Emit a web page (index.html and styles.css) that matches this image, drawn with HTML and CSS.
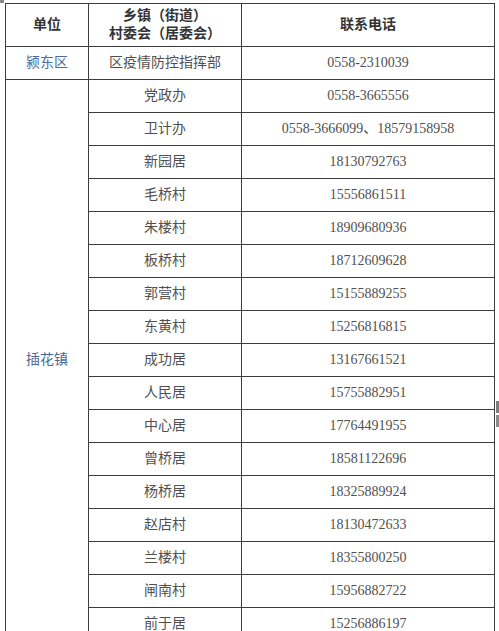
FILE: index.html
```html
<!DOCTYPE html>
<html lang="zh">
<head>
<meta charset="utf-8">
<link rel="stylesheet" href="styles.css">
</head>
<body>
<span class="corner-mark"></span>
<span class="edge-mark"></span>
<table class="contacts">
  <colgroup>
    <col class="c-unit">
    <col class="c-town">
    <col class="c-phone">
  </colgroup>
  <thead>
    <tr class="head">
      <th>单位</th>
      <th>乡镇（街道）<br>村委会（居委会）</th>
      <th>联系电话</th>
    </tr>
  </thead>
  <tbody>
    <tr><td class="unit">颍东区</td><td>区疫情防控指挥部</td><td>0558-2310039</td></tr>
    <tr><td class="unit" rowspan="17">插花镇</td><td>党政办</td><td>0558-3665556</td></tr>
    <tr><td>卫计办</td><td>0558-3666099、18579158958</td></tr>
    <tr><td>新园居</td><td>18130792763</td></tr>
    <tr><td>毛桥村</td><td>15556861511</td></tr>
    <tr><td>朱楼村</td><td>18909680936</td></tr>
    <tr><td>板桥村</td><td>18712609628</td></tr>
    <tr><td>郭营村</td><td>15155889255</td></tr>
    <tr><td>东黄村</td><td>15256816815</td></tr>
    <tr><td>成功居</td><td>13167661521</td></tr>
    <tr><td>人民居</td><td>15755882951</td></tr>
    <tr><td>中心居</td><td>17764491955</td></tr>
    <tr><td>曾桥居</td><td>18581122696</td></tr>
    <tr><td>杨桥居</td><td>18325889924</td></tr>
    <tr><td>赵店村</td><td>18130472633</td></tr>
    <tr><td>兰楼村</td><td>18355800250</td></tr>
    <tr><td>闸南村</td><td>15956882722</td></tr>
    <tr><td>前于居</td><td>15256886197</td></tr>
  </tbody>
</table>
</body>
</html>
```
FILE: styles.css
```css
html, body {
  margin: 0;
  padding: 0;
  background: #fff;
}
body {
  position: relative;
  padding: 3px 0 0 5px;
  font-family: "Liberation Serif", "Noto Sans CJK SC", serif;
  color: #505050;
}
.corner-mark {
  position: absolute;
  left: 0;
  top: 0;
  width: 4px;
  height: 3px;
  background: #8a8a8a;
}
.edge-mark {
  position: absolute;
  right: 0;
  top: 401px;
  width: 3px;
  height: 26px;
  background: linear-gradient(#7d7d7d 0 12px, #fff 12px 14px, #8a8a8a 14px);
}
.contacts {
  border-collapse: collapse;
  table-layout: fixed;
  width: 489px;
}
.c-unit { width: 83px; }
.c-town { width: 153px; }
.c-phone { width: 253px; }
.contacts th,
.contacts td {
  border: 1px solid #3c3c3c;
  padding: 0;
  text-align: center;
  vertical-align: middle;
  font-size: 14px;
  line-height: 18px;
  font-weight: normal;
}
.contacts td {
  height: 32px;
}
.contacts th {
  height: 42px;
  font-weight: bold;
  color: #333;
}
.contacts td.unit {
  color: #4a6a9c;
}
```
